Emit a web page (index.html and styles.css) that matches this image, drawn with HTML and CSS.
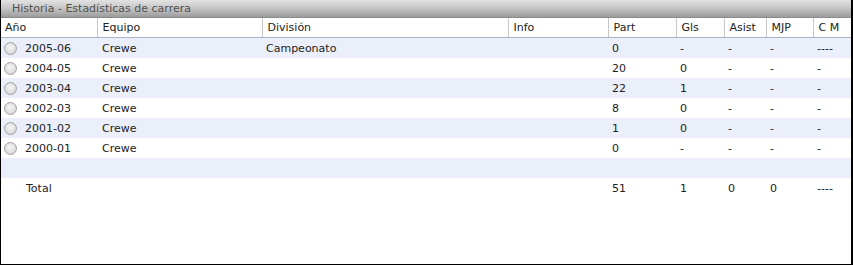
FILE: index.html
```html
<!DOCTYPE html>
<html lang="es">
<head>
<meta charset="utf-8">
<title>Historia - Estadísticas de carrera</title>
<link rel="stylesheet" href="styles.css">
</head>
<body>
<div class="panel">
  <div class="titlebar">Historia - Estadísticas de carrera</div>
  <table class="grid">
    <colgroup>
      <col class="c-year"><col class="c-team"><col class="c-div"><col class="c-info"><col class="c-part"><col class="c-gls"><col class="c-asist"><col class="c-mjp"><col class="c-cm">
    </colgroup>
    <thead>
      <tr>
        <th class="first">Año</th><th>Equipo</th><th>División</th><th>Info</th><th>Part</th><th>Gls</th><th>Asist</th><th>MJP</th><th>C M</th>
      </tr>
    </thead>
    <tbody>
      <tr class="alt"><td class="first"><span class="radio"></span>2005-06</td><td>Crewe</td><td>Campeonato</td><td></td><td>0</td><td>-</td><td>-</td><td>-</td><td>----</td></tr>
      <tr><td class="first"><span class="radio"></span>2004-05</td><td>Crewe</td><td></td><td></td><td>20</td><td>0</td><td>-</td><td>-</td><td>-</td></tr>
      <tr class="alt"><td class="first"><span class="radio"></span>2003-04</td><td>Crewe</td><td></td><td></td><td>22</td><td>1</td><td>-</td><td>-</td><td>-</td></tr>
      <tr><td class="first"><span class="radio"></span>2002-03</td><td>Crewe</td><td></td><td></td><td>8</td><td>0</td><td>-</td><td>-</td><td>-</td></tr>
      <tr class="alt"><td class="first"><span class="radio"></span>2001-02</td><td>Crewe</td><td></td><td></td><td>1</td><td>0</td><td>-</td><td>-</td><td>-</td></tr>
      <tr><td class="first"><span class="radio"></span>2000-01</td><td>Crewe</td><td></td><td></td><td>0</td><td>-</td><td>-</td><td>-</td><td>-</td></tr>
      <tr class="alt"><td class="first"></td><td></td><td></td><td></td><td></td><td></td><td></td><td></td><td></td></tr>
      <tr><td class="first total">Total</td><td></td><td></td><td></td><td>51</td><td>1</td><td>0</td><td>0</td><td>----</td></tr>
    </tbody>
  </table>
</div>
</body>
</html>
```

FILE: styles.css
```css
html, body {
  margin: 0;
  padding: 0;
  background: #ffffff;
}

.panel {
  width: 853px;
  height: 265px;
  box-sizing: border-box;
  border: 1px solid #000000;
  border-top: none;
  border-right: 2px solid #000000;
  background: #ffffff;
  font-family: "DejaVu Sans", Verdana, sans-serif;
  font-size: 11px;
  color: #222222;
  overflow: hidden;
}

.titlebar {
  height: 17px;
  line-height: 17px;
  padding-left: 11px;
  color: #505050;
  background: linear-gradient(to bottom, #e2e2e2 0%, #c8c8c8 45%, #9c9c9c 100%);
  border-bottom: 1px solid #8a8a8a;
  white-space: nowrap;
}

.grid {
  border-collapse: collapse;
  table-layout: fixed;
  width: 850px;
}

.c-year { width: 96px; }
.c-team { width: 165px; }
.c-div { width: 246px; }
.c-info { width: 100px; }
.c-part { width: 68px; }
.c-gls { width: 48px; }
.c-asist { width: 42px; }
.c-mjp { width: 47px; }
.c-cm { width: 38px; }

.grid th {
  height: 19px;
  padding: 0 0 0 5px;
  text-align: left;
  font-weight: normal;
  color: #222222;
  background: #ffffff;
  border-left: 1px solid #c8c8c8;
  border-bottom: 1px solid #a9b4c8;
  white-space: nowrap;
}

.grid th.first {
  border-left: none;
  padding-left: 4px;
}

.grid td {
  height: 20px;
  padding: 0 0 0 4px;
  white-space: nowrap;
  vertical-align: middle;
}

.grid td:nth-child(2),
.grid th:nth-child(2) {
  padding-left: 5px;
}

.grid td.first {
  padding-left: 3px;
}

.grid td.total {
  padding-left: 25px;
}

.grid tr.alt td {
  background: #ebeffa;
}

.radio {
  display: inline-block;
  width: 13px;
  height: 13px;
  box-sizing: border-box;
  border: 1px solid #a0a0a0;
  border-radius: 50%;
  background: radial-gradient(circle at 45% 40%, #f6f6f6 0%, #dedede 60%, #c8c8c8 100%);
  vertical-align: -3px;
  margin-right: 8px;
}
```
